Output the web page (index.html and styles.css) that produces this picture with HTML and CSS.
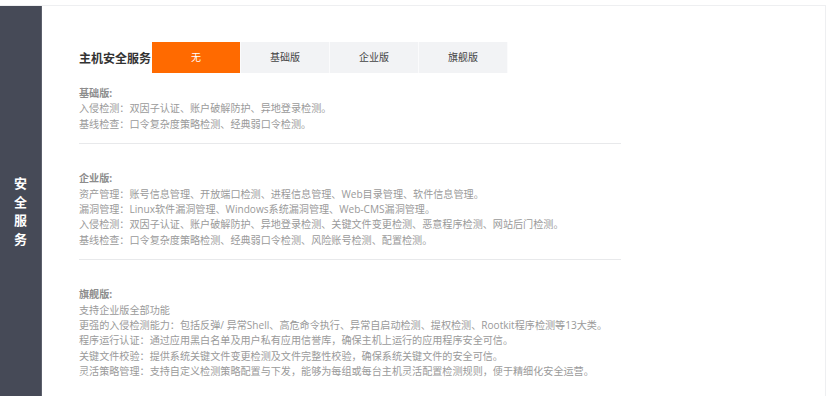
FILE: index.html
```html
<!DOCTYPE html>
<html lang="zh-CN">
<head>
    <meta charset="UTF-8">
    <meta name="viewport" content="width=device-width, initial-scale=1.0">
    <title>主机安全服务</title>
    <link rel="stylesheet" href="styles.css">
</head>
<body>
    <div class="panel">
        <div class="side">
            <div class="side-title">安<br>全<br>服<br>务</div>
        </div>
        <div class="main">
            <div class="service-row">
                <h2 class="service-title">主机安全服务</h2>
                <div class="tabs">
                    <div class="tab active">无</div>
                    <div class="tab">基础版</div>
                    <div class="tab">企业版</div>
                    <div class="tab">旗舰版</div>
                </div>
            </div>

            <div class="plan first">
                <div class="plan-name">基础版:</div>
                <p>入侵检测：双因子认证、账户破解防护、异地登录检测。</p>
                <p>基线检查：口令复杂度策略检测、经典弱口令检测。</p>
            </div>

            <div class="plan">
                <div class="plan-name">企业版:</div>
                <p>资产管理：账号信息管理、开放端口检测、进程信息管理、Web目录管理、软件信息管理。</p>
                <p>漏洞管理：Linux软件漏洞管理、Windows系统漏洞管理、Web-CMS漏洞管理。</p>
                <p>入侵检测：双因子认证、账户破解防护、异地登录检测、关键文件变更检测、恶意程序检测、网站后门检测。</p>
                <p>基线检查：口令复杂度策略检测、经典弱口令检测、风险账号检测、配置检测。</p>
            </div>

            <div class="plan last">
                <div class="plan-name">旗舰版:</div>
                <p>支持企业版全部功能</p>
                <p>更强的入侵检测能力：包括反弹/ 异常Shell、高危命令执行、异常自启动检测、提权检测、Rootkit程序检测等13大类。</p>
                <p>程序运行认证：通过应用黑白名单及用户私有应用信誉库，确保主机上运行的应用程序安全可信。</p>
                <p>关键文件校验：提供系统关键文件变更检测及文件完整性校验，确保系统关键文件的安全可信。</p>
                <p>灵活策略管理：支持自定义检测策略配置与下发，能够为每组或每台主机灵活配置检测规则，便于精细化安全运营。</p>
            </div>
        </div>
    </div>
</body>
</html>
```

FILE: styles.css
```css
body {
    margin: 0;
    background: #fff;
    font-family: "Open Sans", "Noto Sans CJK SC", sans-serif;
}
.panel {
    display: flex;
    margin-top: 5px;
    width: 826px;
    height: 391px;
    border-top: 1px solid #eeeff1;
    border-right: 1px solid #eeeff1;
    box-sizing: border-box;
    overflow: hidden;
}
.side {
    width: 41px;
    flex-shrink: 0;
    background: #464a57;
    border-right: 1px solid #5d616d;
    display: flex;
    align-items: center;
    justify-content: center;
}
.side-title {
    color: #fff;
    font-size: 13px;
    font-weight: bold;
    line-height: 18.5px;
    text-align: center;
    margin-top: 20px;
}
.main {
    padding: 36px 0 0 37px;
    width: 542px;
}
.service-row {
    display: flex;
    align-items: center;
}
.service-title {
    margin: 0 2px 0 0;
    font-size: 12px;
    font-weight: bold;
    color: #333;
    width: 71px;
    white-space: nowrap;
}
.tabs {
    display: flex;
}
.tab {
    width: 88px;
    height: 31px;
    line-height: 31px;
    text-align: center;
    font-size: 10px;
    color: #444;
    background: #f2f3f5;
    border-right: 1px solid #fbfbfc;
}
.tab.active {
    background: #ff6a00;
    color: #fff;
}
.plan {
    padding: 27px 0 11px;
    border-bottom: 1px solid #e8e9eb;
    font-size: 10.1px;
    line-height: 15.4px;
    color: #9a9a9a;
}
.plan.first {
    padding-top: 13px;
}
.plan.last {
    border-bottom: none;
}
.plan-name {
    font-weight: bold;
    color: #8c8c8c;
}
.plan p {
    margin: 0;
    white-space: nowrap;
}
```
